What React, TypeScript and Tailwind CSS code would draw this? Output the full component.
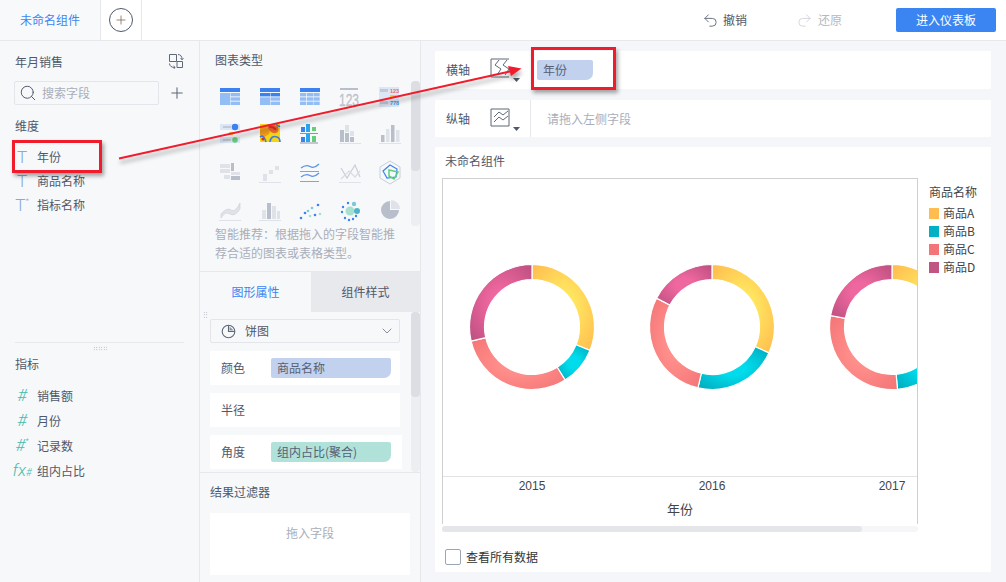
import React from "react";
import { Search, Plus, ChevronDown, Undo2, Redo2 } from "lucide-react";

const B = "#3b82f0", L = "#93bdf5", G = "#b9bfca", H = "#dfe2e8";
const R = (x: number, y: number, w: number, h: number, f: string) => <rect x={x} y={y} width={w} height={h} fill={f} />;
const Base = (y = 25, c = "#dfe2e8") => R(4, y, 22, 1, c);

const icons: React.ReactNode[] = [
  <>{R(5, 7, 20, 4, B)}{R(5, 12, 10, 12, L)}{R(15.5, 12, 9.5, 3.4, L)}{R(15.5, 16.3, 9.5, 3.4, L)}{R(15.5, 20.6, 9.5, 3.4, L)}</>,
  <>{R(5, 7, 20, 4, B)}{R(5, 12, 10, 3.4, B)}{R(15.5, 12, 9.5, 3.4, B)}{R(5, 16.3, 10, 7.7, L)}{R(15.5, 16.3, 9.5, 3.4, L)}{R(15.5, 20.6, 9.5, 3.4, L)}</>,
  <>{R(5, 7, 20, 4, B)}{[12, 16.3, 20.6].map((y) => [5, 11.9, 18.5].map((x) => <rect key={`${x}-${y}`} x={x} y={y} width={6.2} height={3.4} fill={L} />))}</>,
  <>{R(5, 7, 18, 2, G)}<text x="14" y="25" textAnchor="middle" fontSize="16" fill="#bcc2cc" stroke="#bcc2cc" strokeWidth=".3" fontFamily="Liberation Sans" transform="translate(3.5 0) scale(.75 1)">123</text></>,
  <>{R(4, 6, 20, 20, "#dbe6f7")}{R(5, 8, 8, 3, "#c3c9d5")}<text x="15" y="12" fontSize="5.5" fill="#ee6a6a" fontWeight="700" fontFamily="Liberation Sans">123</text>{R(5, 20, 8, 3, "#c3c9d5")}{R(15, 14, 6, 3, "#ffc14f")}<text x="15" y="24" fontSize="5.5" fill="#3f9adf" fontWeight="700" fontFamily="Liberation Sans">778</text></>,
  <>{R(5, 6, 20, 6, "#dbe6f7")}{R(5, 19, 20, 6, "#dbe6f7")}{R(8, 8, 8, 2, "#c3c9d5")}{R(8, 21, 8, 2, "#c3c9d5")}<circle cx="20" cy="9" r="3.2" fill={B} /><circle cx="20" cy="22" r="2.8" fill="#63cf7a" />{R(14, 14, 4, 3, "#ffc14f")}</>,
  <>{R(5, 6, 20, 18, "#f5d50f")}<path d="M5 11 Q9 5 13 10 T11 18 Q7 21 5 17Z" fill="#f39b1f" /><path d="M12 7 Q18 5 23 9 Q25 16 18 15 Q13 13 12 7Z" fill="#ef6a2e" /><path d="M14 9 Q18 8 21 12" stroke="#e22b2b" strokeWidth="2" fill="none" /><path d="M5 19 Q9 16 11 24 M15 24 Q16 17 22 19 Q25 20 25 24 M21 6 Q23 9 25 8" stroke="#3d7ee0" strokeWidth="1.6" fill="none" /><circle cx="8" cy="21" r="1.6" fill="#e22b2b" /></>,
  <>{R(5, 15, 18, 1, "#8d96a8")}{R(5, 24.5, 18, 1, "#8d96a8")}{R(6, 9, 4, 5, B)}{R(11, 6, 4, 8, "#2aa7ec")}{R(17, 9, 4, 4, "#63cf7a")}{R(6, 19, 4, 5, B)}{R(11, 16, 4, 8, "#2aa7ec")}{R(17, 18, 4, 6, "#63cf7a")}</>,
  <>{R(5, 12, 4, 12, G)}{R(10, 7, 4, 7, H)}{R(10, 15, 4, 9, G)}{R(15, 13, 4, 5, H)}{R(15, 19, 4, 5, G)}{Base()}</>,
  <>{R(6, 17, 3.5, 7, G)}{R(11, 11, 3.5, 13, H)}{R(16, 7, 3.5, 17, G)}{R(21, 12, 3.5, 12, H)}{Base()}</>,
  <>{R(5, 7, 10, 4, H)}{R(5, 12, 10, 4, H)}{R(9, 18, 6, 4, H)}{R(16, 6, 3, 8, G)}{R(16, 15, 9, 3, H)}{R(16, 19, 9, 4, G)}</>,
  <>{R(8, 17, 4, 7, H)}{R(14, 13, 4, 4, H)}{R(20, 9, 4, 4, H)}{Base()}</>,
  <><path d="M6 11 Q11 7 15 9.5 T24 7" stroke="#5a93ea" strokeWidth="1.3" fill="none" /><path d="M6 20 Q11 16 15 18.5 T24 16" stroke="#5a93ea" strokeWidth="1.3" fill="none" />{R(5, 14, 19, 1, "#9aa2b2")}{R(5, 24, 19, 1, "#9aa2b2")}</>,
  <><path d="M6 11 L12 21 L20 8 L25 20" stroke="#c9ced7" strokeWidth="1.2" fill="none" /><path d="M6 22 L14 14 L20 20 L25 14" stroke="#d8dbe2" strokeWidth="1.2" fill="none" />{Base()}</>,
  <><path d="M15 4 L25 10 V21 L15 27 L5 21 V10Z" fill="none" stroke="#c9ced7" strokeWidth="1" /><path d="M8 14 L15 8 L22 12 L21 20 L12 21Z" fill="none" stroke={B} strokeWidth="1.2" /><path d="M14 13 L23 15 L19 22 L14 19Z" fill="none" stroke="#5ccf7c" strokeWidth="1.5" /></>,
  <><path d="M6 19 Q12 12 16 15 T25 8 V14 Q20 22 15 19 T6 23Z" fill="#dfe2e8" stroke="#c9ced7" strokeWidth=".6" />{Base()}</>,
  <>{R(7, 15, 4, 9, H)}{R(12, 8, 4, 16, G)}{R(17, 11, 4, 13, H)}{R(22, 16, 3, 8, H)}{Base()}</>,
  <>{[[6, 23, B], [10, 18, B], [15, 21, "#a8e0cf"], [17, 13, "#7cc8d8"], [20, 20, B], [23, 10, B], [13, 16, "#7cc8d8"], [25, 19, "#a8e0cf"]].map(([x, y, c], i) => <circle key={i} cx={x as number} cy={y as number} r={1.3} fill={c as string} />)}</>,
  <><circle cx="15" cy="16" r="4.5" fill="#a8e0cf" /><circle cx="22" cy="16" r="3" fill="#4fb5c6" /><circle cx="19" cy="9" r="2.2" fill="#7cc8d8" />{[[8, 12], [7, 17], [10, 23], [14, 25], [18, 24], [13, 8], [21, 21]].map(([x, y], i) => <circle key={i} cx={x} cy={y} r={1.2} fill={B} />)}</>,
  <><path d="M15 6 A9 9 0 1 0 24 15 H15Z" fill="#b9bfca" /><path d="M16 5 A9 9 0 0 1 25 14 H16Z" fill="#dfe2e8" /></>,
];

const polar = (cx: number, cy: number, r: number, a: number) => {
  const t = ((a - 90) * Math.PI) / 180;
  return [cx + r * Math.cos(t), cy + r * Math.sin(t)];
};
const arc = (cx: number, cy: number, a0: number, a1: number) => {
  const [x0, y0] = polar(cx, cy, 62.5, a0);
  const [x1, y1] = polar(cx, cy, 62.5, a1);
  const [x2, y2] = polar(cx, cy, 47.5, a1);
  const [x3, y3] = polar(cx, cy, 47.5, a0);
  const big = a1 - a0 > 180 ? 1 : 0;
  return `M${x0} ${y0}A62.5 62.5 0 ${big} 1 ${x1} ${y1}L${x2} ${y2}A47.5 47.5 0 ${big} 0 ${x3} ${y3}Z`;
};
const donuts = [
  { cx: 89, stops: [0, 112, 148, 257, 360] },
  { cx: 269, stops: [0, 114.5, 193, 297.5, 360] },
  { cx: 449, stops: [0, 108, 175, 280.5, 360] },
];
const grads = [
  ["gy", "#ffe760", "#ffbc4f"],
  ["gc", "#00dcec", "#00aabd"],
  ["gr", "#ff8f8b", "#f47577"],
  ["gp", "#ee679f", "#bd5080"],
];

function Chip({ children, color = "bg-[#c2d1ee]", w }: { children: React.ReactNode; color?: string; w: string }) {
  return <div className={`${w} ${color} h-[20px] pl-[6px] text-[12px] leading-[20px] text-[#566075] rounded-[2px] rounded-br-[7px]`}>{children}</div>;
}

function Field({ icon, label, cls = "text-[#8aa6dc]" }: { icon: React.ReactNode; label: string; cls?: string }) {
  return (
    <div className="flex items-center h-full">
      <span className={`w-[22px] ml-[11px] mr-[4px] shrink-0 text-[17px] font-light leading-none flex justify-center font-['Roboto',sans-serif] ${cls}`}>{icon}</span>
      <span className="text-[12px] text-[#4f586b]">{label}</span>
    </div>
  );
}

const Grip = ({ cls }: { cls: string }) => <div className={`${cls} bg-[radial-gradient(#9aa2b0_0.7px,transparent_0.8px)] bg-[length:2.5px_2.5px]`} />;

function PropRow({ label, w = "w-[190px]", children }: { label: string; w?: string; children?: React.ReactNode }) {
  return (
    <div className={`${w} h-[34px] mb-[8px] bg-white flex items-center shrink-0`}>
      <span className="w-[61px] pl-[11px] text-[12px] text-[#4f586b]">{label}</span>
      {children}
    </div>
  );
}

export default function App() {
  return (
    <div className="relative w-[1006px] h-[582px] overflow-hidden flex flex-col bg-[#f5f6f9] font-['Noto_Sans_CJK_SC','Noto_Sans',sans-serif]">
      <header className="h-[41px] shrink-0 bg-white border-b border-[#e6e8ec] flex items-stretch">
        <div className="w-[101px] bg-[#f8f9fb] border-r border-[#e6e8ec] flex items-center pl-[20px] text-[12px] text-[#3b85f2]">未命名组件</div>
        <div className="w-[41px] border-r border-[#e6e8ec] flex items-center justify-center">
          <div className="w-[24px] h-[24px] rounded-full border border-[#4f586b] flex items-center justify-center text-[#7a6350]"><Plus size={14} strokeWidth={1.3} /></div>
        </div>
        <div className="flex-1 flex items-center">
          <div className="ml-[560px] flex items-center text-[12px] text-[#4f586b]"><Undo2 size={17} strokeWidth={1.4} className="mr-[4px] text-[#6b7280]" />撤销</div>
          <div className="ml-[49px] flex items-center text-[12px] text-[#b4b9c3]"><Redo2 size={17} strokeWidth={1.4} className="mr-[5px] text-[#d3d7de]" />还原</div>
          <div className="ml-[54px] w-[100px] h-[24px] rounded-[2px] bg-[#3a85f2] text-white text-[12px] flex items-center justify-center">进入仪表板</div>
        </div>
      </header>

      <div className="flex-1 min-h-0 flex">
        <aside className="w-[200px] shrink-0 bg-[#f7f8fa] border-r border-[#e6e8ec] flex flex-col">
          <div className="mt-[9px] h-[24px] flex items-center justify-between pl-[15px] pr-[15px] text-[12px] text-[#4f586b]">
            年月销售
            <svg width="16" height="16" viewBox="0 0 16 16" fill="none" stroke="#5f6878" strokeWidth="1" className="-mt-[2px]"><path d="M1.5 1.5H8.5V8.5H1.5Z" /><path d="M9 8.5H14.5V14.5H9Z" /><path d="M10 1.5C12.5 1.5 14 3.2 14 6.5M12.6 5.2L14 6.8L15.5 5.2" /><path d="M1.5 10.5C1.5 13 3.5 14.5 7 14.5M5.5 13L7.2 14.5L5.5 16" /></svg>
          </div>
          <div className="mt-[7px] flex items-center pl-[14px]">
            <div className="w-[145px] h-[24px] border border-[#e3e5ea] rounded-[2px] flex items-center pl-[4px] text-[12px] text-[#a9aeb9]"><Search size={18} strokeWidth={1.3} className="text-[#4f586b] mr-[5px]" />搜索字段</div>
            <Plus size={18} strokeWidth={1.4} className="ml-[9px] text-[#5f6878]" />
          </div>
          <div className="mt-[11px] h-[20px] pl-[15px] text-[12px] leading-[20px] text-[#4f586b]">维度</div>
          <div className="mt-[9px] h-[24px]"><Field icon="T" label="年份" /></div>
          <div className="h-[24px]"><Field icon="T" label="商品名称" /></div>
          <div className="h-[24px]"><Field icon={<span>T<span className="text-[8px] align-top">*</span></span>} label="指标名称" /></div>
          <div className="mt-[125px] mx-[15px] border-t border-[#e6e8ec] h-0" />
          <Grip cls="w-[14px] h-[5px] ml-[93px] mt-[3px]" />
          <div className="mt-[3px] h-[20px] pl-[15px] text-[12px] leading-[20px] text-[#4f586b]">指标</div>
          <div className="h-[9px]" />
          <div className="h-[25px]"><Field icon={<i>#</i>} label="销售额" cls="text-[#46bcae]" /></div>
          <div className="h-[25px]"><Field icon={<i>#</i>} label="月份" cls="text-[#46bcae]" /></div>
          <div className="h-[25px]"><Field icon={<i>#<span className="text-[8px] align-top">*</span></i>} label="记录数" cls="text-[#46bcae]" /></div>
          <div className="h-[25px]"><Field icon={<i className="whitespace-nowrap">fx<span className="text-[10px]">#</span></i>} label="组内占比" cls="text-[#46bcae]" /></div>
        </aside>

        <section className="w-[221px] shrink-0 bg-[#f7f8fa] border-r border-[#e6e8ec] flex flex-col">
          <div className="h-[231px] shrink-0 border-b border-[#e6e8ec]">
            <div className="mt-[9px] h-[20px] pl-[15px] text-[12px] leading-[20px] text-[#4f586b]">图表类型</div>
            <div className="mt-[11px] flex">
              <div className="ml-[10px] w-[200px] h-[145px] grid grid-cols-[repeat(5,40px)] grid-rows-[37px_39px_38px_30px] justify-items-center items-start">
                {icons.map((ic, i) => <svg key={i} width="30" height="30" viewBox="0 0 30 30">{ic}</svg>)}
              </div>
              <div className="ml-[1px] w-[9px] h-[145px] bg-[#eceef2] rounded-[4px]"><div className="w-full h-[90px] bg-[#dcdee3] rounded-[4px]" /></div>
            </div>
            <p className="-mt-[2px] pl-[15px] w-[198px] text-[12px] leading-[19px] text-[#a9aeb9]">智能推荐：根据拖入的字段智能推荐合适的图表或表格类型。</p>
          </div>
          <div className="h-[40px] shrink-0 flex text-[12px]">
            <div className="w-[111px] flex items-center justify-center text-[#3b85f2]">图形属性</div>
            <div className="flex-1 bg-[#e8e9ed] flex items-center justify-center text-[#4f586b]">组件样式</div>
          </div>
          <div className="relative h-[160px] shrink-0 flex overflow-hidden">
            <Grip cls="absolute left-[3px] top-[-6px] w-[5px] h-[13px]" />
            <div className="pl-[10px] w-[211px] pt-[7px] flex flex-col">
              <div className="w-[190px] h-[24px] mb-[8px] shrink-0 border border-[#e3e5ea] rounded-[2px] flex items-center pl-[10px] text-[12px] text-[#4f586b]">
                <svg width="15" height="15" viewBox="0 0 15 15" fill="none" stroke="#5f6878" strokeWidth="1.1" className="mr-[9px]"><circle cx="7.5" cy="7.5" r="6.3" /><path d="M7.5 1.2V7.5H13.8" /><path d="M8.5 2.4 L12.6 6.5 H8.5Z" fill="#8d94a3" stroke="none" /></svg>
                饼图
                <ChevronDown size={16} strokeWidth={1.2} className="ml-auto mr-[4px] text-[#6b7280]" />
              </div>
              <PropRow label="颜色"><Chip w="w-[120px]">商品名称</Chip></PropRow>
              <PropRow label="半径" />
              <PropRow label="角度" w="w-[192px]"><Chip w="w-[120px]" color="bg-[#b0e2da]">组内占比(聚合)</Chip></PropRow>
            </div>
            <div className="w-[9px] h-[160px] bg-[#eceef2] rounded-[4px]"><div className="w-full h-[85px] bg-[#dcdee3] rounded-[4px]" /></div>
          </div>
          <div className="flex-1 border-t border-[#e6e8ec]">
            <div className="mt-[9px] h-[20px] pl-[10px] text-[12px] leading-[20px] text-[#4f586b]">结果过滤器</div>
            <div className="mt-[11px] ml-[10px] w-[200px] h-[62px] bg-white text-center pt-[10px] text-[12px] leading-[20px] text-[#a9aeb9]">拖入字段</div>
          </div>
        </section>

        <main className="flex-1 px-[14px] pt-[10px] flex flex-col">
          <div className="w-[556px] h-[38px] bg-white flex items-center shrink-0 text-[12px] text-[#4f586b]">
            <span className="pl-[11px] w-[55px]">横轴</span>
            <svg width="36" height="26" viewBox="0 0 36 26" fill="none" className="shrink-0" stroke="#5f6878" strokeWidth="1"><path d="M1 2V20H19M1 2H19" /><path d="M9 3L5 8L11 12L7 18" /><path d="M17 3L13 8L19 12L15 18" /><path d="M23 21H30L26.5 25Z" fill="#4f586b" stroke="none" /></svg>
            <div className="ml-[11px]"><Chip w="w-[56px]">年份</Chip></div>
          </div>
          <div className="mt-[11px] w-[556px] h-[37px] bg-white flex items-center shrink-0 text-[12px] text-[#4f586b]">
            <span className="pl-[11px] w-[55px]">纵轴</span>
            <svg width="36" height="26" viewBox="0 0 36 26" fill="none" className="shrink-0" stroke="#5f6878" strokeWidth="1"><path d="M1 3V20H19M1 3H19V20" /><path d="M4 11L9 6L13 9L18 5" /><path d="M4 16L9 11L13 14L18 10" /><path d="M23 21H30L26.5 25Z" fill="#4f586b" stroke="none" /></svg>
            <div className="ml-[4px] h-full border-l border-[#e6e8ec] pl-[16px] flex items-center text-[#a9aeb9]">请拖入左侧字段</div>
          </div>
          <div className="mt-[10px] w-[556px] h-[425px] bg-white shrink-0 flex flex-col">
            <div className="h-[31px] pl-[10px] pt-[4px] text-[12px] leading-[20px] text-[#4f586b] shrink-0">未命名组件</div>
            <div className="flex h-[346px] shrink-0">
              <div className="ml-[7px] w-[476px] h-[346px] border-x border-t border-[#cfcfcf] shrink-0">
                <svg width="474" height="345" viewBox="0 0 474 345">
                  <defs>
                    {grads.map(([id, a, b]) => (
                      <radialGradient key={id} id={id} cx="0.5" cy="0.5" r="0.68"><stop offset="0.25" stopColor={a} /><stop offset="1" stopColor={b} /></radialGradient>
                    ))}
                  </defs>
                  {donuts.map((d) => d.stops.slice(0, 4).map((a, i) => (
                    <path key={`${d.cx}-${i}`} d={arc(d.cx, 148, a, d.stops[i + 1])} fill={`url(#${grads[i][0]})`} stroke="#fff" strokeWidth="1.2" />
                  )))}
                  <path d="M0 297.5H474" stroke="#e3e3e3" />
                  {[89, 269, 449].map((x, i) => <text key={x} x={x} y="311" textAnchor="middle" fontSize="12" fill="#444" fontFamily="Liberation Sans">{2015 + i}</text>)}
                  <text x="237" y="335" textAnchor="middle" fontSize="13" fill="#444">年份</text>
                </svg>
              </div>
              <div className="pl-[11px] pt-[6px] text-[12px] text-[#444]">
                <div className="h-[16px] leading-[16px] mb-[4px]">商品名称</div>
                {[["商品A", "bg-[#ffbc4f]"], ["商品B", "bg-[#00b0c4]"], ["商品C", "bg-[#f47577]"], ["商品D", "bg-[#c25484]"]].map(([t, c]) => (
                  <div key={t} className="h-[18px] flex items-center"><span className={`w-[10px] h-[11px] mr-[4px] ${c}`} />{t}</div>
                ))}
              </div>
            </div>
            <div className="ml-[7px] mt-[2px] w-[476px] h-[6px] bg-[#f6f6f8] rounded-[3px] shrink-0"><div className="w-[420px] h-full bg-[#e5e6ea] rounded-[3px]" /></div>
            <div className="mt-[16px] ml-[10px] flex items-center text-[12px] text-[#333]">
              <span className="w-[16px] h-[16px] mr-[5px] border border-[#9aa5b8] rounded-[2px] bg-white" />查看所有数据
            </div>
          </div>
        </main>
      </div>

      <div className="absolute left-[12px] top-[140px] w-[90px] h-[33px] border-[3px] border-[#f01c2c] shadow-[2px_3px_4px_rgba(0,0,0,0.35)]" />
      <div className="absolute left-[531px] top-[47px] w-[85px] h-[43px] border-[3px] border-[#f01c2c] shadow-[2px_3px_4px_rgba(0,0,0,0.35)]" />
      <svg className="absolute left-0 top-0 pointer-events-none drop-shadow-[1px_4px_2px_rgba(0,0,0,0.35)]" width="1006" height="582" viewBox="0 0 1006 582">
        <path d="M119 158.5L512 71" stroke="#f01c2c" strokeWidth="2" fill="none" />
        <path d="M521.5 68.5L508 66L511 76Z" fill="#f01c2c" />
      </svg>
    </div>
  );
}
